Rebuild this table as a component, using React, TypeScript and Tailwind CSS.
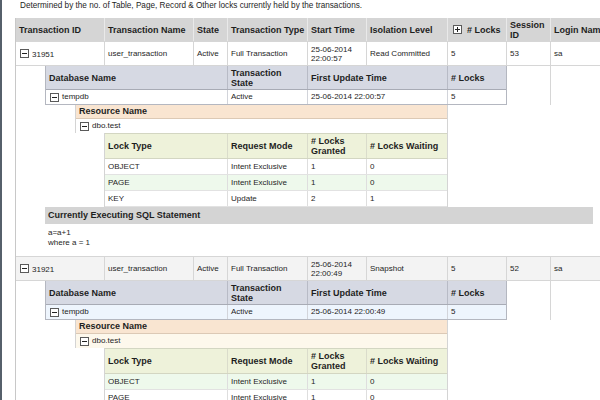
import type { ReactNode } from "react";

function Toggle({ plus = false }: { plus?: boolean }) {
  return (
    <svg width="9" height="9" viewBox="0 0 9 9" className="shrink-0">
      <rect x="0.5" y="0.5" width="8" height="8" fill="#fff" stroke="#5a5a5a" />
      <path d="M2 4.5h5" stroke="#222" />
      {plus && <path d="M4.5 2v5" stroke="#222" />}
    </svg>
  );
}

function Cell({ w, className = "", children }: { w: string; className?: string; children?: ReactNode }) {
  return (
    <div className={`${w} shrink-0 flex items-center gap-[3px] px-[3px] border-r overflow-hidden whitespace-nowrap ${className}`}>
      {children}
    </div>
  );
}

interface Txn {
  id: string;
  start: [string, string];
  isolation: string;
  session: string;
  update: string;
  rowBg: string;
  dbBg: string;
  resBg: string;
  lockBgs: string[];
}

const locks = [
  { type: "OBJECT", mode: "Intent Exclusive", granted: "1", waiting: "0" },
  { type: "PAGE", mode: "Intent Exclusive", granted: "1", waiting: "0" },
  { type: "KEY", mode: "Update", granted: "2", waiting: "1" },
];

function Transaction({ t, sql }: { t: Txn; sql: boolean }) {
  return (
    <>
      {/* transaction row */}
      <div className={`flex h-[24px] border-t border-[#d6d6d6] ${t.rowBg}`}>
        <Cell w="w-[89px]" className="border-[#d6d6d6] pl-[4px]">
          <Toggle />
          <span className="pt-[3px]">{t.id}</span>
        </Cell>
        <Cell w="w-[89px]" className="border-[#d6d6d6]">user_transaction</Cell>
        <Cell w="w-[34px]" className="border-[#d6d6d6]">Active</Cell>
        <Cell w="w-[80px]" className="border-[#d6d6d6]">Full Transaction</Cell>
        <Cell w="w-[59px]" className="border-[#d6d6d6] leading-[9px]">
          <span>
            {t.start[0]}
            <br />
            {t.start[1]}
          </span>
        </Cell>
        <Cell w="w-[81px]" className="border-[#d6d6d6]">{t.isolation}</Cell>
        <Cell w="w-[59px]" className="border-[#d6d6d6]">5</Cell>
        <Cell w="w-[44px]" className="border-[#d6d6d6]">{t.session}</Cell>
        <Cell w="w-[50px]" className="border-transparent">sa</Cell>
      </div>

      {/* database table */}
      <div className="flex border-t border-[#d6d6d6] pl-[29px]">
        <div className="flex flex-col w-[462px] border-l border-r border-b border-[#b4b7c0]">
          <div className="flex h-[24px] bg-[#d6d9e3] font-bold text-[9px] leading-[10px] border-b border-[#a8abb5]">
            <Cell w="w-[182px]" className="border-[#b8bbc6]">Database Name</Cell>
            <Cell w="w-[80px]" className="border-[#b8bbc6]">
              <span>
                Transaction
                <br />
                State
              </span>
            </Cell>
            <Cell w="w-[140px]" className="border-[#b8bbc6]">First Update Time</Cell>
            <Cell w="w-[58px]" className="border-transparent">
              # Locks
            </Cell>
          </div>
          <div className={`flex h-[14px] ${t.dbBg}`}>
            <Cell w="w-[182px]" className="border-[#d2d4da] pl-[4px]">
              <Toggle />
              tempdb
            </Cell>
            <Cell w="w-[80px]" className="border-[#d2d4da]">Active</Cell>
            <Cell w="w-[140px]" className="border-[#d2d4da]">{t.update}</Cell>
            <Cell w="w-[58px]" className="border-transparent">5</Cell>
          </div>
        </div>
        <div className="w-[44px] border-r border-[#d6d6d6]" />
      </div>

      {/* resource table */}
      <div className="pl-[59px]">
        <div className="w-[373px] border-l border-r border-[#d4d4d4]">
          <div className="h-[14px] flex items-center px-[3px] bg-[#f9e5d1] font-bold text-[9px] border-b border-[#dcc9b5]">
            Resource Name
          </div>
          <div className={`h-[14px] flex items-center gap-[3px] pl-[4px] ${t.resBg}`}>
            <Toggle />
            dbo.test
          </div>
        </div>
      </div>

      {/* lock table */}
      <div className="pl-[88px]">
        <div className="w-[344px] border-l border-r border-[#d4d4d4]">
          <div className="flex h-[26px] bg-[#eef2da] font-bold text-[9px] leading-[10px] border-t border-b border-[#d3d6c2]">
            <Cell w="w-[123px]" className="border-[#dadccb]">Lock Type</Cell>
            <Cell w="w-[80px]" className="border-[#dadccb]">Request Mode</Cell>
            <Cell w="w-[59px]" className="border-[#dadccb]">
              <span>
                # Locks
                <br />
                Granted
              </span>
            </Cell>
            <Cell w="w-[80px]" className="border-transparent"># Locks Waiting</Cell>
          </div>
          {locks.map((l, i) => (
            <div key={l.type} className={`flex h-[16px] border-b border-[#e2e2e2] ${t.lockBgs[i]}`}>
              <Cell w="w-[123px]" className="border-[#dedede]">{l.type}</Cell>
              <Cell w="w-[80px]" className="border-[#dedede]">{l.mode}</Cell>
              <Cell w="w-[59px]" className="border-[#dedede]">{l.granted}</Cell>
              <Cell w="w-[80px]" className="border-transparent">{l.waiting}</Cell>
            </div>
          ))}
        </div>
      </div>

      {sql && (
        <div className="pl-[29px]">
          <div className="w-[548px] h-[17px] flex items-center px-[3px] bg-[#d4d4d4] font-bold text-[9px]">
            Currently Executing SQL Statement
          </div>
          <div className="h-[32px] pt-[4px] px-[3px] leading-[10px]">
            a=a+1
            <br />
            where a = 1
          </div>
        </div>
      )}
    </>
  );
}

const txns: Txn[] = [
  {
    id: "31951",
    start: ["25-06-2014", "22:00:57"],
    isolation: "Read Committed",
    session: "53",
    update: "25-06-2014 22:00:57",
    rowBg: "bg-white",
    dbBg: "bg-white",
    resBg: "bg-white",
    lockBgs: ["bg-white", "bg-[#eef9ec]", "bg-white"],
  },
  {
    id: "31921",
    start: ["25-06-2014", "22:00:49"],
    isolation: "Snapshot",
    session: "52",
    update: "25-06-2014 22:00:49",
    rowBg: "bg-[#f3f3f3]",
    dbBg: "bg-[#eef5fd]",
    resBg: "bg-[#fdf8ec]",
    lockBgs: ["bg-[#eef9ec]", "bg-white", "bg-[#eef9ec]"],
  },
];

export default function App() {
  return (
    <div className="flex w-[600px] h-[400px] overflow-hidden bg-white font-['Liberation_Sans',Arial,sans-serif] text-[8px] text-[#1e1e1e]">
      <div className="w-[2px] shrink-0 bg-[#56606b]" />
      <div className="flex flex-col flex-1 min-h-0">
        <div className="h-[18px] shrink-0 pl-[18px] pt-[1px] leading-[10px] text-[8.2px]">
          Determined by the no. of Table, Page, Record &amp; Other locks currently held by the transactions.
        </div>
        <div className="ml-[13px] shrink-0 flex-1 border-l border-[#c8c8c8]">
          <div className="flex h-[23px] bg-[#d5d5d5] font-bold text-[9px] leading-[10px]">
            <Cell w="w-[89px]" className="border-[#e9e9e9]">Transaction ID</Cell>
            <Cell w="w-[89px]" className="border-[#e9e9e9]">Transaction Name</Cell>
            <Cell w="w-[34px]" className="border-[#e9e9e9]">State</Cell>
            <Cell w="w-[80px]" className="border-[#e9e9e9]">Transaction Type</Cell>
            <Cell w="w-[59px]" className="border-[#e9e9e9]">Start Time</Cell>
            <Cell w="w-[81px]" className="border-[#e9e9e9]">Isolation Level</Cell>
            <Cell w="w-[59px]" className="border-[#e9e9e9] pl-[5px]">
              <Toggle plus />
              <span className="pl-[2px]"># Locks</span>
            </Cell>
            <Cell w="w-[44px]" className="border-[#e9e9e9]">
              <span>
                Session
                <br />
                ID
              </span>
            </Cell>
            <Cell w="w-[50px]" className="border-transparent">Login Name</Cell>
          </div>
          {txns.map((t, i) => (
            <Transaction key={t.id} t={t} sql={i === 0} />
          ))}
        </div>
      </div>
    </div>
  );
}
